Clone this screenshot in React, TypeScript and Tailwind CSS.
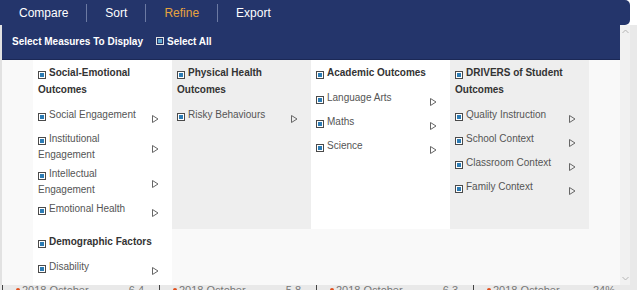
import React from "react";

type Group = { title: string; items: string[]; shade: "white" | "gray" };

const groups: Group[] = [
  {
    title: "Social-Emotional Outcomes",
    items: ["Social Engagement", "Institutional Engagement", "Intellectual Engagement", "Emotional Health"],
    shade: "white",
  },
  { title: "Physical Health Outcomes", items: ["Risky Behaviours"], shade: "gray" },
  { title: "Academic Outcomes", items: ["Language Arts", "Maths", "Science"], shade: "white" },
  {
    title: "DRIVERS of Student Outcomes",
    items: ["Quality Instruction", "School Context", "Classroom Context", "Family Context"],
    shade: "gray",
  },
  { title: "Demographic Factors", items: ["Disability"], shade: "white" },
];

const tabs = ["Compare", "Sort", "Refine", "Export"];

function Check({ light }: { light?: boolean }) {
  return (
    <span
      className={`mr-[3px] inline-flex h-[8px] w-[8px] shrink-0 items-center justify-center border align-[-1px] ${
        light ? "border-[#e4e4e4] bg-[#24356b]" : "border-[#4a4a4a] bg-white"
      }`}
    >
      <span className={`h-[4px] w-[4px] ${light ? "bg-[#5fa9d2]" : "bg-[#2c7cb5]"}`} />
    </span>
  );
}

function Arrow() {
  return (
    <svg width="7" height="8" viewBox="0 0 7 8" className="ml-[8px] shrink-0 self-center">
      <polygon points="0.5,0.5 6,4 0.5,7.5" fill="none" stroke="#666" strokeWidth="1" />
    </svg>
  );
}

function Column({ group }: { group: Group }) {
  return (
    <div className={`w-[139px] pb-[4px] pl-[5px] pt-[4px] ${group.shade === "white" ? "bg-white" : "bg-[#eeeeee]"}`}>
      <div className="mb-[9px] w-[125px] text-[10px] font-bold leading-[17px] text-[#333]">
        <Check />
        {group.title}
      </div>
      {group.items.map((item) => (
        <div key={item} className="flex min-h-[24px]">
          <div className="w-[106px] self-start pb-[3px] text-[10px] leading-[16px] text-[#555]">
            <Check />
            {item}
          </div>
          <Arrow />
        </div>
      ))}
    </div>
  );
}

function Chevron({ down }: { down?: boolean }) {
  return (
    <svg width="7" height="5" viewBox="0 0 7 5">
      <polyline
        points={down ? "0.5,1 3.5,4 6.5,1" : "0.5,4 3.5,1 6.5,4"}
        fill="none"
        stroke="#b5b5b5"
        strokeWidth="1"
      />
    </svg>
  );
}

const cells = ["6.4", "5.8", "6.3", "24%"];

export default function App() {
  return (
    <div className="flex h-[290px] w-[637px] flex-col overflow-hidden bg-white font-['Liberation_Sans',Arial,sans-serif]">
      <div className="flex">
        <div className="flex h-[25px] w-[630px] items-center rounded-r-[5px] bg-[#24356b] pl-px text-[12px] text-white">
          {tabs.map((tab, i) => (
            <React.Fragment key={tab}>
              {i > 0 && <span className="h-[18px] w-px bg-[#6c7aa3]" />}
              <span className={`px-[18px] ${tab === "Refine" ? "text-[#e6a33e]" : ""}`}>{tab}</span>
            </React.Fragment>
          ))}
        </div>
      </div>

      <div className="flex h-[260px]">
        <div className="w-[2px] bg-[#e2e2e2]" />
        <div className="flex w-[618px] flex-col overflow-hidden bg-[#f9f9f9]">
          <div className="flex h-[35px] shrink-0 items-center border-b border-[#1b2856] bg-[#24356b] pb-[2px] pl-[10px] text-[10px] font-bold text-white">
            Select Measures To Display
            <span className="ml-[13px] flex items-center">
              <Check light />
              Select All
            </span>
          </div>
          <div className="flex flex-wrap pl-[31px]">
            {groups.map((g) => (
              <Column key={g.title} group={g} />
            ))}
          </div>
        </div>
        <div className="flex w-[10px] flex-col items-center justify-between bg-[#f1f1f1] py-[4px]">
          <Chevron />
          <Chevron down />
        </div>
        <div className="w-[7px] bg-[#e9e9e9]" />
      </div>

      <div className="h-[5px] overflow-hidden bg-[#e9e9e9]">
        <div className="-mt-[2px] flex pl-[2px] text-[11px] leading-[14px] text-[#777]">
          {cells.map((v) => (
            <div key={v} className="flex w-[157px] items-center border-l border-[#444] pl-[13px] pr-[15px]">
              <span className="mr-[2px] h-[4px] w-[4px] rounded-full bg-[#e0501e]" />
              <span>2018 October</span>
              <span className="ml-auto">{v}</span>
            </div>
          ))}
        </div>
      </div>
    </div>
  );
}
